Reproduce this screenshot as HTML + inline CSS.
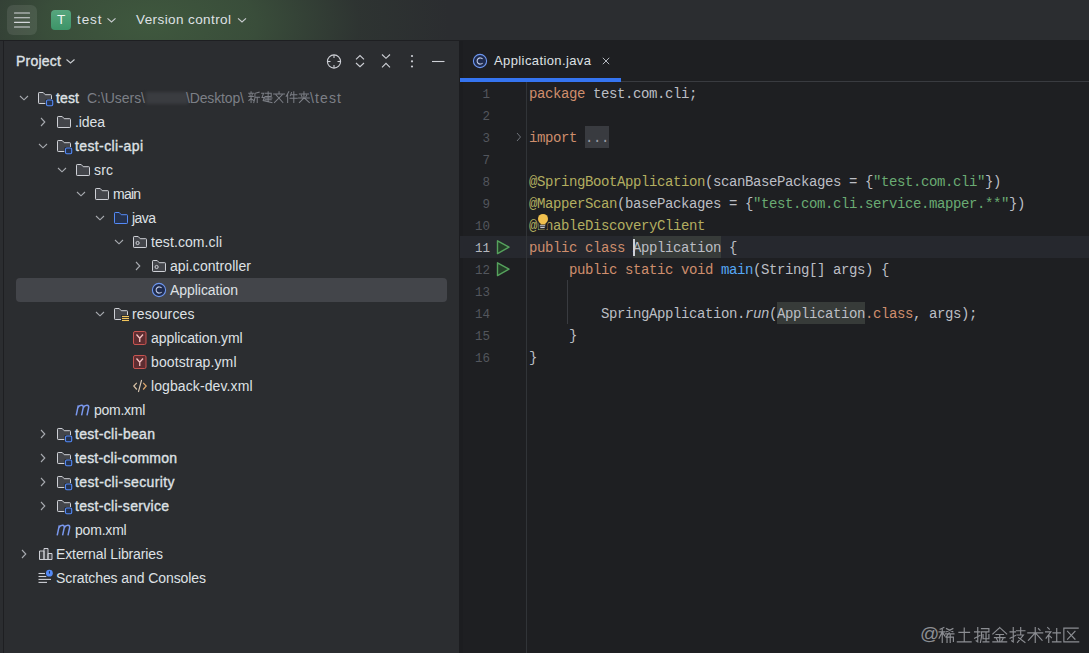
<!DOCTYPE html>
<html><head><meta charset="utf-8">
<style>
*{margin:0;padding:0;box-sizing:border-box}
html,body{width:1089px;height:653px;overflow:hidden;background:#1e1f22}
body{position:relative;font-family:"Liberation Sans",sans-serif;font-size:13px;color:#dfe1e5}
.abs{position:absolute}
.t{position:absolute;white-space:nowrap;line-height:24px;height:24px;font-size:14px}
.sb{-webkit-text-stroke:0.35px currentColor}
.code{position:absolute;left:529.4px;font-family:"Liberation Mono",monospace;font-size:14px;letter-spacing:-0.4px;line-height:22px;height:22px;white-space:pre;color:#bcbec4}
.ln{position:absolute;left:450px;width:40px;font-family:"Liberation Mono",monospace;font-size:12.5px;line-height:22px;color:#53565d;text-align:right}
.kw{color:#cf8e6d}.str{color:#6aab73}.ann{color:#b3ae60}.fn{color:#56a8f5}.it{font-style:italic}
</style></head><body>

<div class="abs" style="left:0;top:0;width:1089px;height:40px;background:#2b2d30;overflow:hidden"><div class="abs" style="left:0;top:0;width:1089px;height:40px;background:radial-gradient(300px 160px at 150px 24px,rgba(63,88,62,1) 0%,rgba(60,83,60,0.85) 35%,rgba(50,62,52,0.4) 70%,rgba(43,45,48,0) 100%)"></div></div>
<div class="abs" style="left:0;top:40px;width:1089px;height:1px;background:#1e1f22"></div>
<div class="abs" style="left:0;top:41px;width:459px;height:612px;background:#2b2d30"></div>
<div class="abs" style="left:3px;top:41px;width:1px;height:612px;background:#1e1f22"></div>
<div class="abs" style="left:459px;top:41px;width:4px;height:612px;background:#1c1d20"></div>
<div class="abs" style="left:7px;top:5px;width:30px;height:30px;border-radius:6px;background:rgba(255,255,255,0.09)"></div>
<svg class="abs" style="left:0;top:0" width="460" height="40">
<g stroke="#d5d8dc" stroke-width="1.15" stroke-linecap="round">
<line x1="14.5" y1="13" x2="29.5" y2="13"/><line x1="14.5" y1="17.7" x2="29.5" y2="17.7"/>
<line x1="14.5" y1="22.3" x2="29.5" y2="22.3"/><line x1="14.5" y1="27" x2="29.5" y2="27"/></g>
<defs><linearGradient id="tg" x1="0" y1="0" x2="0" y2="1"><stop offset="0" stop-color="#57a67e"/><stop offset="1" stop-color="#3d9468"/></linearGradient></defs>
<rect x="51" y="10" width="20" height="20" rx="4" fill="url(#tg)"/>
<path d="M107.5 18.3 L111.5 22 L115.5 18.3" fill="none" stroke="#c9ccd0" stroke-width="1.1"/>
<path d="M238 18.3 L242 22 L246 18.3" fill="none" stroke="#c9ccd0" stroke-width="1.1"/>
</svg>
<div class="t" style="left:51px;top:8px;width:20px;text-align:center;color:#f0f6f2;font-size:13.5px">T</div>
<div class="t" style="left:77px;top:8px;font-size:13.5px;letter-spacing:0.913px">test</div>
<div class="t" style="left:136px;top:8px;font-size:13.5px;letter-spacing:0.407px">Version control</div>
<div class="t sb" style="left:16px;top:49px;letter-spacing:0.238px">Project</div>
<svg class="abs" style="left:0;top:41px" width="459" height="40">
<path d="M66.5 18.5 L70.5 22 L74.5 18.5" fill="none" stroke="#c9ccd0" stroke-width="1.1"/>
<g fill="none" stroke="#ced0d6" stroke-width="1.1">
<circle cx="334" cy="20.5" r="6.6"/>
<line x1="334" y1="13.9" x2="334" y2="17"/><line x1="334" y1="24" x2="334" y2="27.1"/>
<line x1="327.4" y1="20.5" x2="330.5" y2="20.5"/><line x1="337.5" y1="20.5" x2="340.6" y2="20.5"/>
<path d="M356 18.3L360 14.6L364 18.3M356 22L360 25.7L364 22"/>
<path d="M382 13.5L386 17.3L390 13.5M382 26.3L386 22.3L390 26.3"/>
<line x1="432" y1="20.5" x2="444.5" y2="20.5"/>
</g>
<g fill="#ced0d6"><circle cx="412" cy="15" r="1.1"/><circle cx="412" cy="20.3" r="1.1"/><circle cx="412" cy="25.5" r="1.1"/></g>
</svg>
<div class="abs" style="left:16px;top:278px;width:431px;height:24px;border-radius:4px;background:#43454a"></div>
<svg class="abs" style="left:0;top:0" width="459" height="653"><path d="M20 96L24 99.8L28 96" fill="none" stroke="#a8abb0" stroke-width="1.1"/><g transform="translate(37,90)"><path d="M1.5 3.2Q1.5 2.5 2.2 2.5H6.2L8.2 4.7H13.8Q14.5 4.7 14.5 5.4V12.8Q14.5 13.5 13.8 13.5H2.2Q1.5 13.5 1.5 12.8Z" fill="#43454a" stroke="#ced0d6" stroke-width="1"/><rect x="8.3" y="9" width="8" height="7.5" rx="1.2" fill="#2b2d30"/><rect x="9.5" y="10" width="6.2" height="5.8" rx="1.2" fill="#25324d" stroke="#548af7" stroke-width="1.1"/></g><path d="M41 118L44.8 122L41 126" fill="none" stroke="#a8abb0" stroke-width="1.1"/><g transform="translate(56,114)"><path d="M1.5 3.2Q1.5 2.5 2.2 2.5H6.2L8.2 4.7H13.8Q14.5 4.7 14.5 5.4V12.8Q14.5 13.5 13.8 13.5H2.2Q1.5 13.5 1.5 12.8Z" fill="#43454a" stroke="#ced0d6" stroke-width="1"/></g><path d="M39 144L43 147.8L47 144" fill="none" stroke="#a8abb0" stroke-width="1.1"/><g transform="translate(56,138)"><path d="M1.5 3.2Q1.5 2.5 2.2 2.5H6.2L8.2 4.7H13.8Q14.5 4.7 14.5 5.4V12.8Q14.5 13.5 13.8 13.5H2.2Q1.5 13.5 1.5 12.8Z" fill="#43454a" stroke="#ced0d6" stroke-width="1"/><rect x="8.3" y="9" width="8" height="7.5" rx="1.2" fill="#2b2d30"/><rect x="9.5" y="10" width="6.2" height="5.8" rx="1.2" fill="#25324d" stroke="#548af7" stroke-width="1.1"/></g><path d="M58 168L62 171.8L66 168" fill="none" stroke="#a8abb0" stroke-width="1.1"/><g transform="translate(75,162)"><path d="M1.5 3.2Q1.5 2.5 2.2 2.5H6.2L8.2 4.7H13.8Q14.5 4.7 14.5 5.4V12.8Q14.5 13.5 13.8 13.5H2.2Q1.5 13.5 1.5 12.8Z" fill="#43454a" stroke="#ced0d6" stroke-width="1"/></g><path d="M77 192L81 195.8L85 192" fill="none" stroke="#a8abb0" stroke-width="1.1"/><g transform="translate(94,186)"><path d="M1.5 3.2Q1.5 2.5 2.2 2.5H6.2L8.2 4.7H13.8Q14.5 4.7 14.5 5.4V12.8Q14.5 13.5 13.8 13.5H2.2Q1.5 13.5 1.5 12.8Z" fill="#43454a" stroke="#ced0d6" stroke-width="1"/></g><path d="M96 216L100 219.8L104 216" fill="none" stroke="#a8abb0" stroke-width="1.1"/><g transform="translate(113,210)"><path d="M1.5 3.2Q1.5 2.5 2.2 2.5H6.2L8.2 4.7H13.8Q14.5 4.7 14.5 5.4V12.8Q14.5 13.5 13.8 13.5H2.2Q1.5 13.5 1.5 12.8Z" fill="#25324d" stroke="#548af7" stroke-width="1"/></g><path d="M115 240L119 243.8L123 240" fill="none" stroke="#a8abb0" stroke-width="1.1"/><g transform="translate(132,234)"><path d="M1.5 3.2Q1.5 2.5 2.2 2.5H6.2L8.2 4.7H13.8Q14.5 4.7 14.5 5.4V12.8Q14.5 13.5 13.8 13.5H2.2Q1.5 13.5 1.5 12.8Z" fill="#43454a" stroke="#ced0d6" stroke-width="1"/><circle cx="5.6" cy="9" r="1.6" fill="none" stroke="#ced0d6" stroke-width="1"/></g><path d="M136 262L139.8 266L136 270" fill="none" stroke="#a8abb0" stroke-width="1.1"/><g transform="translate(151,258)"><path d="M1.5 3.2Q1.5 2.5 2.2 2.5H6.2L8.2 4.7H13.8Q14.5 4.7 14.5 5.4V12.8Q14.5 13.5 13.8 13.5H2.2Q1.5 13.5 1.5 12.8Z" fill="#43454a" stroke="#ced0d6" stroke-width="1"/><circle cx="5.6" cy="9" r="1.6" fill="none" stroke="#ced0d6" stroke-width="1"/></g><g transform="translate(151,282)"><circle cx="8" cy="8" r="6.6" fill="#1f2b4d" stroke="#6e97f0" stroke-width="1.1"/><path d="M10.6 6A3.1 3.1 0 1 0 10.6 10" fill="none" stroke="#c3cde6" stroke-width="1.05"/></g><path d="M96 312L100 315.8L104 312" fill="none" stroke="#a8abb0" stroke-width="1.1"/><g transform="translate(113,306)"><path d="M1.5 3.2Q1.5 2.5 2.2 2.5H6.2L8.2 4.7H13.8Q14.5 4.7 14.5 5.4V12.8Q14.5 13.5 13.8 13.5H2.2Q1.5 13.5 1.5 12.8Z" fill="#43454a" stroke="#ced0d6" stroke-width="1"/><rect x="8" y="9" width="8.5" height="7" fill="#2b2d30"/><g stroke="#f2c55c" stroke-width="1.1"><line x1="9" y1="10.5" x2="16" y2="10.5"/><line x1="9" y1="12.5" x2="16" y2="12.5"/><line x1="9" y1="14.5" x2="16" y2="14.5"/></g></g><g transform="translate(132,330)"><rect x="1.5" y="1.5" width="12.5" height="13" rx="1.5" fill="#5e2d31" stroke="#c75450" stroke-width="1"/><path d="M4.5 4.5L7.75 8.2L11 4.5M7.75 8.2V12" fill="none" stroke="#f5c1c1" stroke-width="1.3"/></g><g transform="translate(132,354)"><rect x="1.5" y="1.5" width="12.5" height="13" rx="1.5" fill="#5e2d31" stroke="#c75450" stroke-width="1"/><path d="M4.5 4.5L7.75 8.2L11 4.5M7.75 8.2V12" fill="none" stroke="#f5c1c1" stroke-width="1.3"/></g><g transform="translate(132,378)"><path d="M4.8 4.8L1.8 8L4.8 11.5" fill="none" stroke="#d9c2a6" stroke-width="1.2"/><path d="M11.2 4.8L14.2 8L11.2 11.5" fill="none" stroke="#e0a96d" stroke-width="1.2"/><path d="M9.6 2L6.4 14" fill="none" stroke="#d9c8b4" stroke-width="1.1"/></g><g transform="translate(75,402)"><path d="M1.2 13.4L3.3 3.4M2.8 5.8Q4.2 3.2 6.6 3.3Q8.7 3.5 8.2 5.8L6.6 13.4M8.2 5.8Q9.6 3.2 12 3.3Q14.1 3.5 13.6 5.8L12 13.4" fill="none" stroke="#7a98ee" stroke-width="1.5"/></g><path d="M41 430L44.8 434L41 438" fill="none" stroke="#a8abb0" stroke-width="1.1"/><g transform="translate(56,426)"><path d="M1.5 3.2Q1.5 2.5 2.2 2.5H6.2L8.2 4.7H13.8Q14.5 4.7 14.5 5.4V12.8Q14.5 13.5 13.8 13.5H2.2Q1.5 13.5 1.5 12.8Z" fill="#43454a" stroke="#ced0d6" stroke-width="1"/><rect x="8.3" y="9" width="8" height="7.5" rx="1.2" fill="#2b2d30"/><rect x="9.5" y="10" width="6.2" height="5.8" rx="1.2" fill="#25324d" stroke="#548af7" stroke-width="1.1"/></g><path d="M41 454L44.8 458L41 462" fill="none" stroke="#a8abb0" stroke-width="1.1"/><g transform="translate(56,450)"><path d="M1.5 3.2Q1.5 2.5 2.2 2.5H6.2L8.2 4.7H13.8Q14.5 4.7 14.5 5.4V12.8Q14.5 13.5 13.8 13.5H2.2Q1.5 13.5 1.5 12.8Z" fill="#43454a" stroke="#ced0d6" stroke-width="1"/><rect x="8.3" y="9" width="8" height="7.5" rx="1.2" fill="#2b2d30"/><rect x="9.5" y="10" width="6.2" height="5.8" rx="1.2" fill="#25324d" stroke="#548af7" stroke-width="1.1"/></g><path d="M41 478L44.8 482L41 486" fill="none" stroke="#a8abb0" stroke-width="1.1"/><g transform="translate(56,474)"><path d="M1.5 3.2Q1.5 2.5 2.2 2.5H6.2L8.2 4.7H13.8Q14.5 4.7 14.5 5.4V12.8Q14.5 13.5 13.8 13.5H2.2Q1.5 13.5 1.5 12.8Z" fill="#43454a" stroke="#ced0d6" stroke-width="1"/><rect x="8.3" y="9" width="8" height="7.5" rx="1.2" fill="#2b2d30"/><rect x="9.5" y="10" width="6.2" height="5.8" rx="1.2" fill="#25324d" stroke="#548af7" stroke-width="1.1"/></g><path d="M41 502L44.8 506L41 510" fill="none" stroke="#a8abb0" stroke-width="1.1"/><g transform="translate(56,498)"><path d="M1.5 3.2Q1.5 2.5 2.2 2.5H6.2L8.2 4.7H13.8Q14.5 4.7 14.5 5.4V12.8Q14.5 13.5 13.8 13.5H2.2Q1.5 13.5 1.5 12.8Z" fill="#43454a" stroke="#ced0d6" stroke-width="1"/><rect x="8.3" y="9" width="8" height="7.5" rx="1.2" fill="#2b2d30"/><rect x="9.5" y="10" width="6.2" height="5.8" rx="1.2" fill="#25324d" stroke="#548af7" stroke-width="1.1"/></g><g transform="translate(56,522)"><path d="M1.2 13.4L3.3 3.4M2.8 5.8Q4.2 3.2 6.6 3.3Q8.7 3.5 8.2 5.8L6.6 13.4M8.2 5.8Q9.6 3.2 12 3.3Q14.1 3.5 13.6 5.8L12 13.4" fill="none" stroke="#7a98ee" stroke-width="1.5"/></g><path d="M22 550L25.8 554L22 558" fill="none" stroke="#a8abb0" stroke-width="1.1"/><g transform="translate(37,546)"><path d="M2.5 13.5V5H7V13.5ZM7 13.5V2.5H11V13.5ZM11 13.5V7.5H15V13.5Z" fill="#43454a" stroke="#ced0d6" stroke-width="1"/></g><g transform="translate(37,570)"><g stroke="#ced0d6" stroke-width="1.1"><line x1="1.5" y1="3.5" x2="8" y2="3.5"/><line x1="1.5" y1="6.5" x2="9.5" y2="6.5"/><line x1="1.5" y1="9.4" x2="14" y2="9.4"/><line x1="1.5" y1="12.4" x2="10" y2="12.4"/></g><circle cx="12.4" cy="3.2" r="4.2" fill="#2b2d30"/><circle cx="12.4" cy="3.2" r="3.4" fill="#548af7"/><path d="M12.4 1.2V3.6" stroke="#1e2a45" stroke-width="1"/></g></svg>
<div class="t sb" style="left:56px;top:86px;letter-spacing:0.145px">test</div>
<div class="t" style="left:75px;top:110px;letter-spacing:-0.090px">.idea</div>
<div class="t sb" style="left:75px;top:134px;letter-spacing:0.382px">test-cli-api</div>
<div class="t" style="left:94px;top:158px;letter-spacing:0.169px">src</div>
<div class="t" style="left:113px;top:182px;letter-spacing:-0.782px">main</div>
<div class="t" style="left:132px;top:206px;letter-spacing:-0.561px">java</div>
<div class="t" style="left:151px;top:230px;letter-spacing:0.090px">test.com.cli</div>
<div class="t" style="left:170px;top:254px;letter-spacing:0.065px">api.controller</div>
<div class="t" style="left:170px;top:278px;letter-spacing:-0.049px">Application</div>
<div class="t" style="left:132px;top:302px;letter-spacing:0.116px">resources</div>
<div class="t" style="left:151px;top:326px;letter-spacing:-0.071px">application.yml</div>
<div class="t" style="left:151px;top:350px;letter-spacing:0.122px">bootstrap.yml</div>
<div class="t" style="left:151px;top:374px;letter-spacing:0.099px">logback-dev.xml</div>
<div class="t" style="left:94px;top:398px;letter-spacing:-0.266px">pom.xml</div>
<div class="t sb" style="left:75px;top:422px;letter-spacing:0.312px">test-cli-bean</div>
<div class="t sb" style="left:75px;top:446px;letter-spacing:0.229px">test-cli-common</div>
<div class="t sb" style="left:75px;top:470px;letter-spacing:0.391px">test-cli-security</div>
<div class="t sb" style="left:75px;top:494px;letter-spacing:0.303px">test-cli-service</div>
<div class="t" style="left:75px;top:518px;letter-spacing:-0.199px">pom.xml</div>
<div class="t" style="left:56px;top:542px;letter-spacing:-0.114px">External Libraries</div>
<div class="t" style="left:56px;top:566px;letter-spacing:-0.083px">Scratches and Consoles</div>
<div class="t" style="left:87px;top:86px;color:#7c7f86;letter-spacing:-0.042px">C:\Users\</div>
<div class="abs" style="left:146px;top:92px;width:42px;height:12px;background:#3a3c40;filter:blur(1.5px)"></div>
<div class="t" style="left:186px;top:86px;color:#7c7f86;letter-spacing:-0.142px">\Desktop\</div>
<svg class="abs" style="left:0;top:0" width="459" height="120"><g fill="none" stroke="#7c7f86" stroke-width="1.301" stroke-linecap="square"><path transform="translate(248.00,91) scale(0.7688)" d="M4 1V2.5M1 3H7M2.5 4.5L3 6.5M5.5 4.5L5 6.5M1 7H7M4 7V15M4 9.5L1 12.5M4 10L7 12M14.5 1.5L9 3V9L7.5 15M9 8H15M12 8V15"/><path transform="translate(260.45,91) scale(0.7688)" d="M6 3H14V7H6M10 1V14M5 9H15M6 11.5H14M1.5 3H4L2 8.5H5L3.5 12.5L15 15"/><path transform="translate(272.90,91) scale(0.7688)" d="M8 1V3M1 4H15M4 5L13 15M12 5L2 15"/><path transform="translate(285.35,91) scale(0.7688)" d="M4.5 1L1 7M3 5V15M8 2L6.5 6M7 5H15M6 9.5H15.5M11 1V15"/><path transform="translate(297.80,91) scale(0.7688)" d="M2 4H14M4.5 5.5L5.5 7.5M11.5 5.5L10.5 7.5M1 9H15M8 1V9L2 15M8.5 9L15 15"/></g></svg>
<div class="t" style="left:310px;top:86px;color:#7c7f86;letter-spacing:1.136px">\test</div>
<div class="abs" style="left:460px;top:78px;width:161px;height:4px;background:#3574f0"></div>
<div class="abs" style="left:621px;top:81px;width:468px;height:1px;background:#393b40"></div>
<svg class="abs" style="left:472px;top:53px" width="16" height="16"><circle cx="8" cy="8" r="6.6" fill="#1f2b4d" stroke="#6e97f0" stroke-width="1.1"/><path d="M10.6 6A3.1 3.1 0 1 0 10.6 10" fill="none" stroke="#c3cde6" stroke-width="1.05"/></svg>
<div class="t" style="left:494px;top:49px;font-size:13px;letter-spacing:0.396px">Application.java</div>
<svg class="abs" style="left:599.5px;top:55px" width="12" height="12"><path d="M2.8 2.8L9.2 9.2M9.2 2.8L2.8 9.2" stroke="#b4b8bf" stroke-width="1"/></svg>
<div class="abs" style="left:460px;top:236px;width:629px;height:22px;background:#26282e"></div>
<div class="abs" style="left:585px;top:126px;width:24px;height:22px;background:#393b40"></div>
<div class="abs" style="left:633px;top:236px;width:88px;height:22px;background:#373b39"></div>
<div class="abs" style="left:777px;top:302px;width:88px;height:22px;background:#373b39"></div>
<div class="abs" style="left:526px;top:82px;width:1px;height:571px;background:#313438"></div>
<div class="ln" style="top:84px;color:#53565d">1</div>
<div class="code" style="top:83px;left:528.9px"><span class="kw">package</span> test.com.cli;</div>
<div class="ln" style="top:106px;color:#53565d">2</div>
<div class="ln" style="top:128px;color:#53565d">3</div>
<div class="code" style="top:127px;left:528.9px"><span class="kw">import</span> <span style="color:#9a9da4">...</span></div>
<div class="ln" style="top:150px;color:#53565d">7</div>
<div class="ln" style="top:172px;color:#53565d">8</div>
<div class="code" style="top:171px;left:528.9px"><span class="ann">@SpringBootApplication</span>(scanBasePackages = {<span class="str">"test.com.cli"</span>})</div>
<div class="ln" style="top:194px;color:#53565d">9</div>
<div class="code" style="top:193px;left:528.9px"><span class="ann">@MapperScan</span>(basePackages = {<span class="str">"test.com.cli.service.mapper.**"</span>})</div>
<div class="ln" style="top:216px;color:#53565d">10</div>
<div class="code" style="top:215px;left:528.9px"><span class="ann">@EnableDiscoveryClient</span></div>
<div class="ln" style="top:238px;color:#b5b8bf">11</div>
<div class="code" style="top:237px;left:528.9px"><span class="kw">public class</span> Application {</div>
<div class="ln" style="top:260px;color:#53565d">12</div>
<div class="code" style="top:259px;left:568.9px"><span class="kw">public static void</span> <span class="fn">main</span>(String[] args) {</div>
<div class="ln" style="top:282px;color:#53565d">13</div>
<div class="ln" style="top:304px;color:#53565d">14</div>
<div class="code" style="top:303px;left:600.9px">SpringApplication.<span class="it">run</span>(Application<span class="kw">.class</span>, args);</div>
<div class="ln" style="top:326px;color:#53565d">15</div>
<div class="code" style="top:325px;left:568.9px">}</div>
<div class="ln" style="top:348px;color:#53565d">16</div>
<div class="code" style="top:347px;left:528.9px">}</div>
<div class="abs" style="left:632.5px;top:239px;width:2px;height:17px;background:#ced0d6"></div>
<div class="abs" style="left:567px;top:280px;width:1px;height:44px;background:#393b40"></div>
<svg class="abs" style="left:460px;top:82px" width="70" height="300">
<path d="M57 51L60.5 55L57 59" fill="none" stroke="#6f737a" stroke-width="1"/>
<path d="M37.5 158.8L49 165.2L37.5 171.6Z" fill="#233d27" stroke="#56a25d" stroke-width="1.4" stroke-linejoin="round"/>
<path d="M37.5 180.8L49 187.2L37.5 193.6Z" fill="#233d27" stroke="#56a25d" stroke-width="1.4" stroke-linejoin="round"/>
</svg>
<svg class="abs" style="left:534px;top:210px" width="18" height="22">
<circle cx="9" cy="8.9" r="6.3" fill="#1e1f22"/><rect x="4.5" y="12" width="9" height="7.5" rx="1" fill="#1e1f22"/>
<circle cx="9" cy="8.9" r="5" fill="#f0c04e"/><rect x="6.5" y="12" width="5" height="2.5" fill="#f0c04e"/>
<path d="M5.8 15.8H11.2M6.3 17.6H10.7" stroke="#d9dbe0" stroke-width="1"/>
</svg>
<div class="abs" style="left:920px;top:621.5px;font-size:19px;line-height:24px;color:#8c8e93;white-space:nowrap">@</div>
<svg class="abs" style="left:0;top:600px" width="1089" height="53"><g fill="none" stroke="#8c8e93" stroke-width="1.082" stroke-linecap="square"><path transform="translate(938.00,26.5) scale(1.0625)" d="M5.5 1L2 2.5M1 5H6.5M4 2V15M3.5 6L1 11M4.5 6L6.5 9M8 2L14 5M14 2L8 5M7 7H15M10.5 6L7.5 10M8.5 10V15M8.5 10H14.5V14M11.5 8V15"/><path transform="translate(955.75,26.5) scale(1.0625)" d="M3 5.5H13M8 1.5V14.5M1.5 14.5H14.5"/><path transform="translate(973.50,26.5) scale(1.0625)" d="M1 5H6M4 1V14.5L2.5 13.5M1 11L6 8.5M7.5 2H14.5V5H7.5V10L6.5 15M9 7.5V11.5H14.5V7.5M11.8 6V14.5M9 14.5H14.5"/><path transform="translate(991.25,26.5) scale(1.0625)" d="M8 1L1.5 7M8 1L14.5 7M4.5 7.5H11.5M3 10.5H13M8 7.5V14.5M5 11.5L6 13.5M11 11.5L10 13.5M1.5 14.5H14.5"/><path transform="translate(1009.00,26.5) scale(1.0625)" d="M1 5H6M4 1V14.5L2.5 13.5M1 11L6 8.5M7 4H15M11 1V7M7.5 8H13.5L8 15M9 10.5L15 15"/><path transform="translate(1026.75,26.5) scale(1.0625)" d="M1 6H15M8 1V15M7.5 6.5L1.5 13M8.5 6.5L14.5 13M11 2L12.5 3.5"/><path transform="translate(1044.50,26.5) scale(1.0625)" d="M3 1L4.5 2.5M1 5H6L1.5 11M4 8V15M5 9L6.5 10.5M8 6H15M11.5 2V14.5M7.5 14.5H15.5"/><path transform="translate(1062.25,26.5) scale(1.0625)" d="M15 1.5H1.5V14.5H15.5M5 4.5L12 12M12 4.5L5 12"/></g></svg>
</body></html>
